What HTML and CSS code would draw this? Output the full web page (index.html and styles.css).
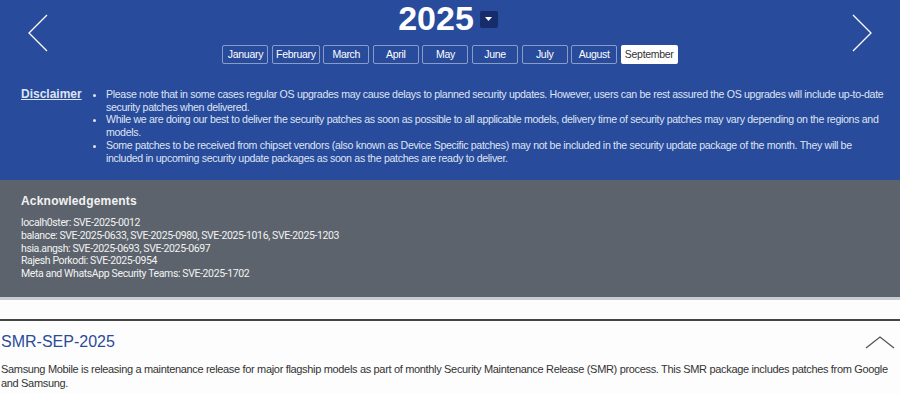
FILE: index.html
```html
<!DOCTYPE html>
<html lang="en">
<head>
    <meta charset="UTF-8">
    <meta name="viewport" content="width=device-width, initial-scale=1.0">
    <title>Security Updates</title>
    <link rel="stylesheet" href="styles.css">
</head>
<body>
    <section class="updates">
        <div class="calendar">
            <a href="#" class="arrow">
                <svg width="20" height="38" viewBox="0 0 20 38"><polyline points="19,1 1,19 19,37" fill="none" stroke="#fff" stroke-width="1.3"/></svg>
            </a>
            <div class="calendar-center">
                <div class="year-row">
                    <span class="year">2025</span>
                    <button class="year-drop">
                        <svg width="7" height="4" viewBox="0 0 7 4"><polygon points="0,0 7,0 3.5,4" fill="#fff"/></svg>
                    </button>
                </div>
                <ul class="months">
                    <li><a href="#">January</a></li>
                    <li><a href="#">February</a></li>
                    <li><a href="#">March</a></li>
                    <li><a href="#">April</a></li>
                    <li><a href="#">May</a></li>
                    <li><a href="#">June</a></li>
                    <li><a href="#">July</a></li>
                    <li><a href="#">August</a></li>
                    <li><a href="#" class="active">September</a></li>
                </ul>
            </div>
            <a href="#" class="arrow">
                <svg width="20" height="38" viewBox="0 0 20 38"><polyline points="1,1 19,19 1,37" fill="none" stroke="#fff" stroke-width="1.3"/></svg>
            </a>
        </div>

        <div class="disclaimer">
            <a href="#" class="disclaimer-title">Disclaimer</a>
            <ul class="disclaimer-list">
                <li>Please note that in some cases regular OS upgrades may cause delays to planned security updates. However, users can be rest assured the OS upgrades will include up-to-date security patches when delivered.</li>
                <li>While we are doing our best to deliver the security patches as soon as possible to all applicable models, delivery time of security patches may vary depending on the regions and models.</li>
                <li>Some patches to be received from chipset vendors (also known as Device Specific patches) may not be included in the security update package of the month. They will be included in upcoming security update packages as soon as the patches are ready to deliver.</li>
            </ul>
        </div>
    </section>

    <section class="thanks">
        <h2>Acknowledgements</h2>
        <p>localh0ster: SVE-2025-0012</p>
        <p>balance: SVE-2025-0633, SVE-2025-0980, SVE-2025-1016, SVE-2025-1203</p>
        <p>hsia.angsh: SVE-2025-0693, SVE-2025-0697</p>
        <p>Rajesh Porkodi: SVE-2025-0954</p>
        <p>Meta and WhatsApp Security Teams: SVE-2025-1702</p>
    </section>

    <section class="release">
        <div class="release-head">
            <h3>SMR-SEP-2025</h3>
            <svg width="30" height="13" viewBox="0 0 30 13"><polyline points="1,12 15,1 29,12" fill="none" stroke="#555" stroke-width="1.3"/></svg>
        </div>
        <p>Samsung Mobile is releasing a maintenance release for major flagship models as part of monthly Security Maintenance Release (SMR) process. This SMR package includes patches from Google and Samsung.</p>
    </section>
</body>
</html>
```

FILE: styles.css
```css
/* Reset */
* {
    margin: 0;
    padding: 0;
    box-sizing: border-box;
}

body {
    font-family: 'Liberation Sans', Arial, sans-serif;
    background-color: #fdfdfd;
    color: #333;
}

/* Blue block */
.updates {
    background-color: #284b9c;
    color: #fff;
    height: 180px;
}

.calendar {
    display: flex;
    justify-content: space-between;
    height: 80px;
    padding: 14px 28px 0 28px;
}

.arrow {
    display: block;
    height: 38px;
}

.calendar-center {
    display: flex;
    flex-direction: column;
    align-items: center;
}

.year-row {
    display: flex;
    align-items: center;
    gap: 6px;
    margin-top: -16px;
    margin-right: 4px;
}

.year {
    font-size: 34px;
    font-weight: 700;
    line-height: 40px;
}

.year-drop {
    width: 18px;
    height: 17px;
    background-color: #172d6b;
    border: none;
    border-radius: 2px;
    display: flex;
    align-items: center;
    justify-content: center;
    margin-top: 2px;
}

.months {
    display: flex;
    gap: 3.6px;
    list-style: none;
    margin-top: 7px;
}

.months a {
    display: block;
    min-width: 46px;
    height: 19px;
    padding: 0 3px;
    line-height: 17px;
    font-size: 10.5px;
    letter-spacing: -0.3px;
    text-align: center;
    color: #fff;
    text-decoration: none;
    border: 1px solid rgba(255, 255, 255, 0.45);
    border-radius: 2px;
}

.months a.active {
    background-color: #fff;
    color: #333;
}

/* Disclaimer */
.disclaimer {
    display: flex;
    padding: 8px 10px 0 21px;
    color: #dfe4f2;
    font-size: 10.6px;
    letter-spacing: -0.32px;
}

.disclaimer-title {
    width: 75px;
    flex-shrink: 0;
    color: #dfe4f2;
    font-size: 12px;
    font-weight: 700;
    line-height: 13px;
    letter-spacing: 0;
}

.disclaimer-list {
    padding-left: 10px;
    line-height: 12.7px;
}

/* Acknowledgements */
.thanks {
    background-color: #5c636c;
    color: #f2f2f2;
    height: 120px;
    padding: 14px 21px 0 21px;
    border-bottom: 3px solid #c9ccd0;
}

.thanks h2 {
    font-size: 12px;
    font-weight: 700;
    margin-bottom: 9px;
    letter-spacing: 0.2px;
}

.thanks p {
    font-family: Roboto, sans-serif;
    font-size: 10.5px;
    letter-spacing: -0.38px;
    line-height: 12.8px;
}

/* Release */
.release {
    margin-top: 19px;
    border-top: 2px solid #444;
    padding: 11px 0 0 1px;
}

.release-head {
    display: flex;
    justify-content: space-between;
    align-items: center;
    padding-right: 5px;
}

.release-head h3 {
    font-size: 16px;
    font-weight: 400;
    color: #2a4b9b;
    line-height: 20px;
}

.release p {
    font-size: 11px;
    letter-spacing: -0.33px;
    line-height: 14px;
    margin-top: 10px;
}
```
